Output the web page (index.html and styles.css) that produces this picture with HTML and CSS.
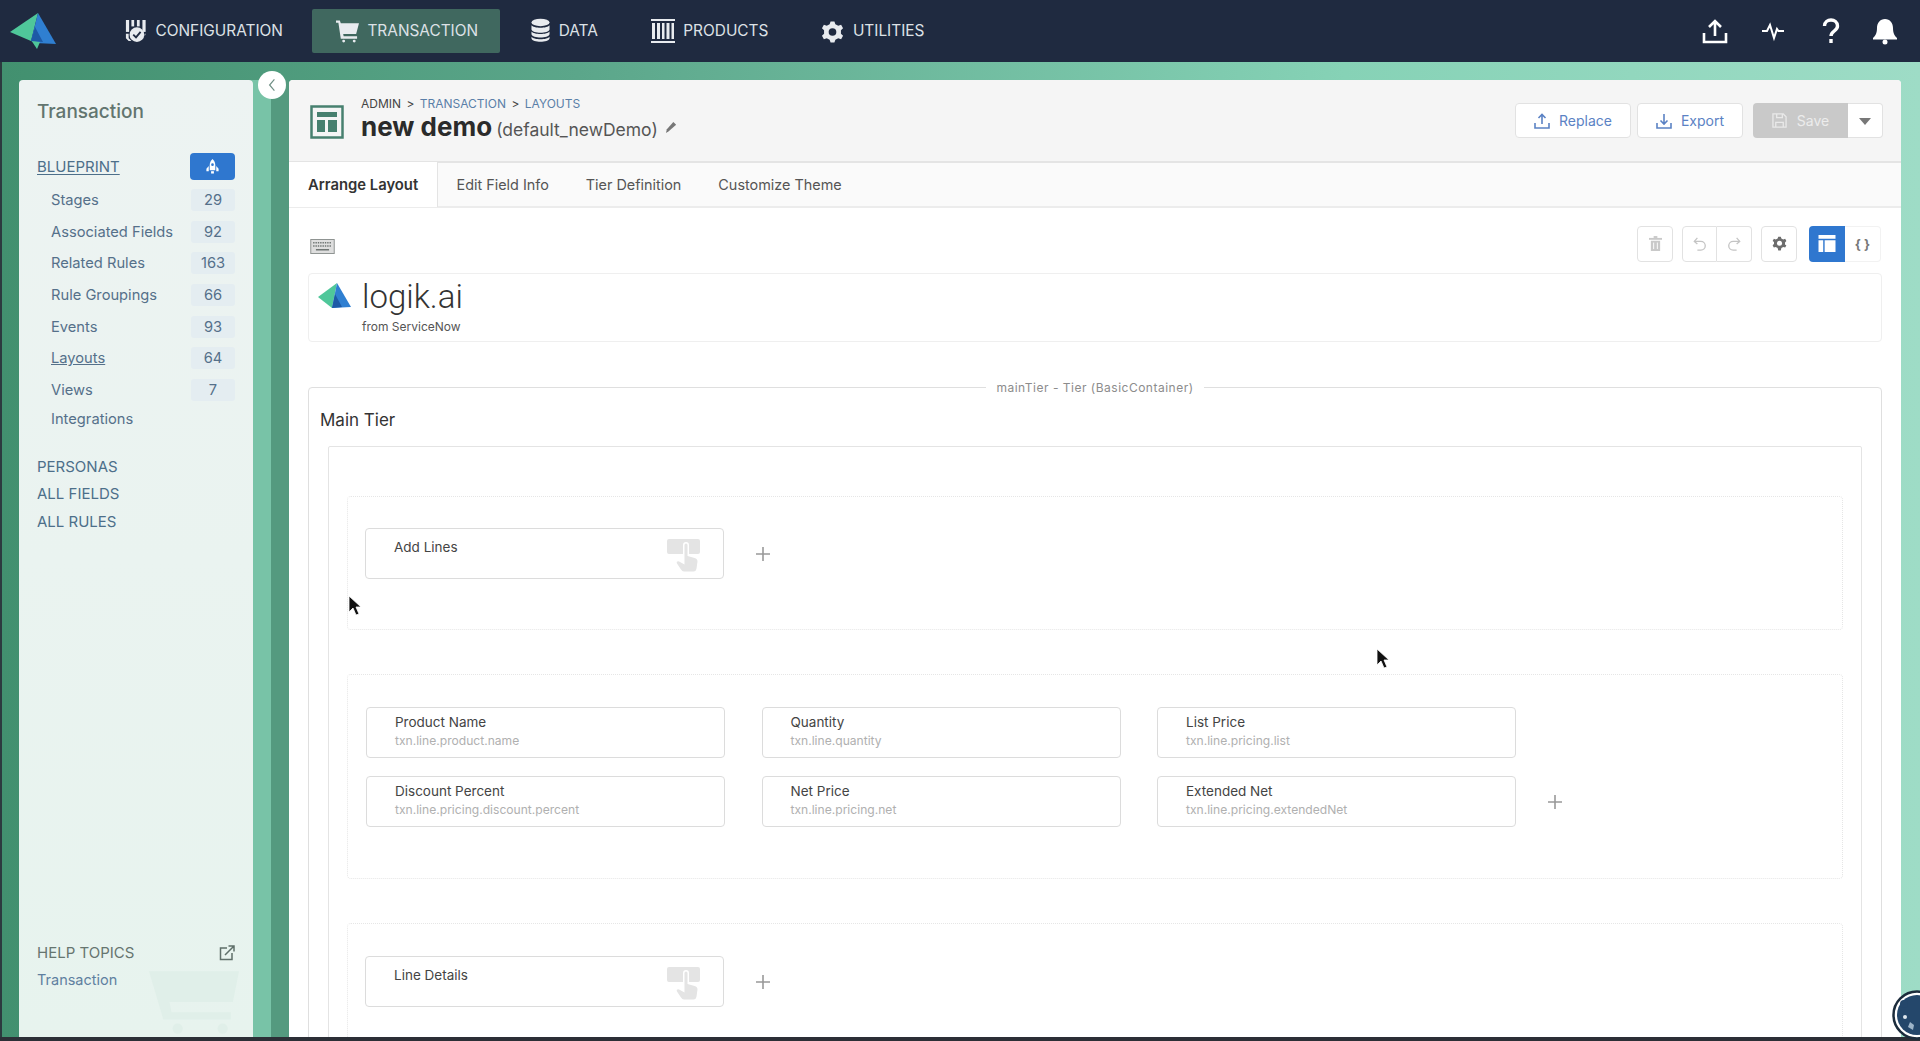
FILE: index.html
```html
<!DOCTYPE html>
<html lang="en">
<head>
    <meta charset="UTF-8">
    <meta name="viewport" content="width=device-width, initial-scale=1.0">
    <title>Layouts - new demo</title>
    <link rel="stylesheet" href="styles.css">
</head>
<body>
    <!-- Top Navigation -->
    <header class="topnav">
        <svg class="brand" viewBox="0 0 46 36">
            <polygon points="28,0 0,19 21,28" fill="#4fc79a"/>
            <polygon points="28,0 21,28 25,30 46,31" fill="#2f7fd1"/>
            <polygon points="21,27 27,36 30,29" fill="#4fc79a"/>
            <polygon points="25,14 21,28 33,29" fill="#1d5aa6"/>
        </svg>
        <nav class="nav-items">
            <a class="nav-item">
                <svg viewBox="0 0 24 26" width="22" height="24"><g fill="#e8ebef"><rect x="1" y="1" width="3.5" height="13"/><rect x="7" y="1" width="3" height="7"/><rect x="13" y="1" width="3" height="7"/><rect x="19" y="1" width="3.5" height="13"/><path d="M1 16h3v5l3 3H4l-3-3zM22.500 16h-1v3z"/><circle cx="13" cy="17" r="8"/></g><path d="M9 17l3 3 5-6" fill="none" stroke="#1f2a40" stroke-width="2"/></svg>
                CONFIGURATION
            </a>
            <a class="nav-item active">
                <svg viewBox="0 0 24 24" width="23" height="24"><path d="M0 1h4l1 3h19l-3 11H7.500L8 17.500h14V20H5L2.500 3.500H0z" fill="#e8ebef"/><circle cx="8" cy="22.500" r="1.500" fill="#e8ebef"/><circle cx="19" cy="22.500" r="1.500" fill="#e8ebef"/></svg>
                TRANSACTION
            </a>
            <a class="nav-item">
                <svg viewBox="0 0 20 26" width="19" height="25"><g fill="#e8ebef"><ellipse cx="10" cy="4.500" rx="9.500" ry="4"/><path d="M.5 7.500c2 3.500 17 3.500 19 0v4.500c-1 4.500-18 4.500-19 0z"/><path d="M.5 14c2 3.500 17 3.500 19 0v3c-1 4.500-18 4.500-19 0z"/><path d="M.5 19.500c2 3.500 17 3.500 19 0v2c-1 4.500-18 4.500-19 0z"/></g></svg>
                DATA
            </a>
            <a class="nav-item">
                <svg viewBox="0 0 24 24" width="24" height="24"><g fill="#e8ebef"><rect y="0" width="24" height="2"/><rect y="22" width="24" height="2"/><rect x="1" y="4" width="3" height="16"/><rect x="6" y="4" width="3" height="16"/><rect x="11" y="4" width="2.500" height="16"/><rect x="15.500" y="4" width="3" height="16"/><rect x="20.500" y="4" width="2.500" height="16"/></g></svg>
                PRODUCTS
            </a>
            <a class="nav-item">
                <svg viewBox="0 0 24 24" width="23" height="24"><path d="M12 2l2 0 1 3 3 1.500 3-1 2 3.500-2.200 2.200v3.600L23 17l-2 3.500-3-1L15 21l-1 3h-4l-1-3-3-1.500-3 1L1 17l2.200-2.200v-3.600L1 9l2-3.500 3 1L9 5l1-3z" fill="#e8ebef"/><circle cx="12" cy="13" r="4" fill="#1f2a40"/></svg>
                UTILITIES
            </a>
        </nav>
        <div class="nav-tools">
            <svg viewBox="0 0 28 28" width="28" height="28" fill="none" stroke="#fff" stroke-width="2.600"><path d="M14 19V4M8 10l6-6 6 6"/><path d="M3 16v9h22v-9"/></svg>
            <svg viewBox="0 0 28 28" width="28" height="28" fill="none" stroke="#fff" stroke-width="2"><path d="M3 14h5l3-6 4 13 3-9 1.500 2H25"/></svg>
            <svg viewBox="0 0 28 28" width="28" height="28" fill="none" stroke="#fff" stroke-width="3.400"><path d="M7.500 9c0-8 13-8 13 0 0 5-6.500 5-6.500 10"/><path d="M14 22v4"/></svg>
            <svg class="bell" viewBox="0 0 28 28" width="28" height="28" fill="#fff"><path d="M14 2c-5 0-8 4-8 9 0 6-2 8-4 10v1.500h24V21c-2-2-4-4-4-10 0-5-3-9-8-9z"/><circle cx="14" cy="25" r="2.500"/></svg>
        </div>
    </header>

    <div class="workspace">
        <!-- Sidebar -->
        <aside class="sidebar">
            <svg class="cart-mark" viewBox="0 0 88 60"><path d="M0 0h88l-6 30H20l2 10h58v7H14z" fill="#e0efe9"/><circle cx="28" cy="56" r="5" fill="#e0efe9"/><circle cx="72" cy="56" r="5" fill="#e0efe9"/></svg>
            <div class="sidebar-top">
                <h2 class="sidebar-title">Transaction</h2>
                <div class="side-head">
                    <a class="side-link current">BLUEPRINT</a>
                    <span class="rocket-badge">
                        <svg viewBox="0 0 16 16" width="15" height="15"><path d="M8 0c2.200 2 3 4.500 3 7v5H5V7c0-2.500.8-5 3-7z" fill="#fff"/><circle cx="8" cy="6" r="1.400" fill="#2f77cf"/><path d="M4 7.500V13H1.500v-2.500zM12 7.500V13h2.500v-2.500z" fill="#fff"/><rect x="6.500" y="13" width="3" height="2.500" fill="#fff"/></svg>
                    </span>
                </div>
                <ul class="side-list">
                    <li>Stages <span class="count">29</span></li>
                    <li>Associated Fields <span class="count">92</span></li>
                    <li>Related Rules <span class="count">163</span></li>
                    <li>Rule Groupings <span class="count">66</span></li>
                    <li>Events <span class="count">93</span></li>
                    <li><u>Layouts</u> <span class="count">64</span></li>
                    <li>Views <span class="count">7</span></li>
                    <li class="plain">Integrations</li>
                </ul>
                <div class="side-links">
                    <a class="side-link">PERSONAS</a>
                    <a class="side-link">ALL FIELDS</a>
                    <a class="side-link">ALL RULES</a>
                </div>
            </div>
            <div class="sidebar-help">
                <div class="help-head">
                    HELP TOPICS
                    <svg viewBox="0 0 16 16" width="16" height="16" fill="none" stroke="#5f6f6a" stroke-width="1.500"><path d="M8 3H1.500v11.500H13V8"/><path d="M6 10L15 1M9.500 1H15v5.500"/></svg>
                </div>
                <a class="help-link">Transaction</a>
            </div>
        </aside>

        <button class="collapse-btn">
            <svg viewBox="0 0 10 16" width="8" height="14" fill="none" stroke="#6f8f85" stroke-width="1.500"><path d="M8 1L2 8l6 7"/></svg>
        </button>

        <!-- Main Panel -->
        <main class="panel">
            <div class="panel-head">
                <svg class="page-icon" viewBox="0 0 34 34" width="34" height="34"><rect x="1.500" y="1.500" width="31" height="31" fill="none" stroke="#47806f" stroke-width="2.500"/><rect x="7" y="7" width="20" height="5" fill="#47806f"/><rect x="7" y="15" width="8" height="12" fill="#47806f"/><rect x="18" y="15" width="9" height="12" fill="#47806f"/></svg>
                <div class="page-title">
                    <div class="crumbs"><span>ADMIN</span> <i>&gt;</i> <a>TRANSACTION</a> <i>&gt;</i> <a>LAYOUTS</a></div>
                    <h1>new demo <small>(default_newDemo)</small>
                        <svg viewBox="0 0 14 14" width="13" height="13" fill="#777"><path d="M1 13l1-4 7-8 3 3-8 7z"/></svg>
                    </h1>
                </div>
                <div class="head-actions">
                    <button class="btn">
                        <svg viewBox="0 0 16 16" width="16" height="16" fill="none" stroke="#5b82c4" stroke-width="1.600"><path d="M8 11V1.500M4.500 5L8 1.500 11.500 5"/><path d="M1 10v5h14v-5"/></svg>
                        Replace
                    </button>
                    <button class="btn">
                        <svg viewBox="0 0 16 16" width="16" height="16" fill="none" stroke="#5b82c4" stroke-width="1.600"><path d="M8 1v10M4.500 7.500L8 11l3.500-3.500"/><path d="M1 10v5h14v-5"/></svg>
                        Export
                    </button>
                    <div class="save-group">
                        <button class="btn-save">
                            <svg viewBox="0 0 16 16" width="15" height="15" fill="none" stroke="#e9e9e9" stroke-width="1.400"><path d="M1 1h11l3 3v11H1zM5 1v4h6V1M4 15v-5h8v5"/></svg>
                            Save
                        </button>
                        <button class="btn-caret"></button>
                    </div>
                </div>
            </div>

            <div class="tabs">
                <a class="tab active">Arrange Layout</a>
                <a class="tab">Edit Field Info</a>
                <a class="tab">Tier Definition</a>
                <a class="tab">Customize Theme</a>
            </div>

            <div class="panel-body">
                <div class="toolbar">
                    <svg viewBox="0 0 26 16" width="25" height="15"><rect x=".5" y=".5" width="25" height="15" fill="#dedede" stroke="#8a8f8d"/><path d="M3 4h20M3 7.500h20" stroke="#6f7573" stroke-width="1.600" stroke-dasharray="1.500 1"/><path d="M6 11.500h14" stroke="#6f7573" stroke-width="1.600"/></svg>
                    <div class="tool-group">
                        <span class="tool faded">
                            <svg viewBox="0 0 14 16" width="13" height="15" fill="#c9c9c9"><rect x="5" y="0" width="4" height="2"/><rect x="0" y="2" width="14" height="2"/><path d="M2 5h10v11H2z"/><path d="M5 7v7M9 7v7" stroke="#fff"/></svg>
                        </span>
                        <div class="tool-pair">
                            <span class="tool">
                                <svg viewBox="0 0 16 16" width="14" height="14" fill="none" stroke="#c4c4c4" stroke-width="1.500"><path d="M5 1L1.500 5 5 8"/><path d="M2 5h7a5 5 0 010 10H5"/></svg>
                            </span>
                            <span class="tool">
                                <svg viewBox="0 0 16 16" width="14" height="14" fill="none" stroke="#c4c4c4" stroke-width="1.500"><path d="M11 1l3.500 4L11 8"/><path d="M14 5H7a5 5 0 000 10h4"/></svg>
                            </span>
                        </div>
                        <span class="tool">
                            <svg viewBox="0 0 24 24" width="15" height="15"><path d="M10 1h4l1 3 3 1.500 3-1 2 3.500-2.200 2.500v3L23 15l-2 3.500-3-1L15 19l-1 4h-4l-1-4-3-1.500-3 1L1 15l2.200-2.500v-3L1 8l2-3.500 3 1L9 4z" fill="#6d6d6d"/><circle cx="12" cy="11.500" r="4" fill="#fff"/></svg>
                        </span>
                        <div class="view-switch">
                            <span class="view on">
                                <svg viewBox="0 0 18 18" width="18" height="17" fill="#fff"><path d="M0 0h18v4H0zM0 5.500h5V18H0zM6.500 5.500H18V18H6.500z"/></svg>
                            </span>
                            <span class="view braces">{ }</span>
                        </div>
                    </div>
                </div>

                <div class="logo-box">
                    <svg viewBox="0 0 34 26" width="34" height="26">
                        <polygon points="19,0 0,14 14,25" fill="#4fc79a"/>
                        <polygon points="19,0 14,25 33,24" fill="#2f7fd1"/>
                        <polygon points="17,11 14,25 24,24" fill="#1d5aa6"/>
                    </svg>
                    <div class="logo-text">
                        <span class="logo-name">logik.ai</span>
                        <span class="logo-from">from ServiceNow</span>
                    </div>
                </div>

                <fieldset class="tier">
                    <legend>mainTier - Tier (BasicContainer)</legend>
                    <h3 class="tier-title">Main Tier</h3>
                    <div class="tier-inner">
                        <section class="tier-row short">
                            <div class="single">
                                <div class="card action">
                                    <span class="card-label">Add Lines</span>
                                    <svg class="touch" viewBox="0 0 33 33" width="33" height="33"><path d="M2 0h29a2 2 0 012 2v11a2 2 0 01-2 2h-9V6a3 3 0 00-6 0v9H2a2 2 0 01-2-2V2a2 2 0 012-2z" fill="#e4e4e4"/><path d="M17.500 6a1.500 1.500 0 013 0v11l7 2c2 .5 3 1.500 3 3.500l-1 7c-.5 2-1 3-3 3H17c-1.500 0-2-1-3-2l-4-6c-1-2 1-3 3-1.500l4.500 2.500z" fill="#e4e4e4"/></svg>
                                </div>
                                <svg class="plus" viewBox="0 0 16 16" width="16" height="16" stroke="#999" stroke-width="1.600"><path d="M8 1v14M1 8h14"/></svg>
                            </div>
                        </section>

                        <section class="tier-row wide">
                            <div class="field-grid">
                                <div class="card"><span class="card-label">Product Name</span><span class="card-sub">txn.line.product.name</span></div>
                                <div class="card"><span class="card-label">Quantity</span><span class="card-sub">txn.line.quantity</span></div>
                                <div class="card"><span class="card-label">List Price</span><span class="card-sub">txn.line.pricing.list</span></div>
                                <span></span>
                                <div class="card"><span class="card-label">Discount Percent</span><span class="card-sub">txn.line.pricing.discount.percent</span></div>
                                <div class="card"><span class="card-label">Net Price</span><span class="card-sub">txn.line.pricing.net</span></div>
                                <div class="card"><span class="card-label">Extended Net</span><span class="card-sub">txn.line.pricing.extendedNet</span></div>
                                <svg class="plus grid-plus" viewBox="0 0 16 16" width="16" height="16" stroke="#999" stroke-width="1.600"><path d="M8 1v14M1 8h14"/></svg>
                            </div>
                        </section>

                        <section class="tier-row last">
                            <div class="single">
                                <div class="card action">
                                    <span class="card-label">Line Details</span>
                                    <svg class="touch" viewBox="0 0 33 33" width="33" height="33"><path d="M2 0h29a2 2 0 012 2v11a2 2 0 01-2 2h-9V6a3 3 0 00-6 0v9H2a2 2 0 01-2-2V2a2 2 0 012-2z" fill="#e4e4e4"/><path d="M17.500 6a1.500 1.500 0 013 0v11l7 2c2 .5 3 1.500 3 3.500l-1 7c-.5 2-1 3-3 3H17c-1.500 0-2-1-3-2l-4-6c-1-2 1-3 3-1.500l4.500 2.500z" fill="#e4e4e4"/></svg>
                                </div>
                                <svg class="plus" viewBox="0 0 16 16" width="16" height="16" stroke="#999" stroke-width="1.600"><path d="M8 1v14M1 8h14"/></svg>
                            </div>
                        </section>
                    </div>
                </fieldset>
            </div>
        </main>
    </div>

    <!-- Things lying over the page -->
    <svg class="cursor cursor-a" viewBox="0 0 14 22" width="14" height="22"><path d="M1 1v16l4-4 3 7 3-1-3-7h5z" fill="#111" stroke="#fff" stroke-width=".8"/></svg>
    <svg class="cursor cursor-b" viewBox="0 0 14 22" width="14" height="22"><path d="M1 1v16l4-4 3 7 3-1-3-7h5z" fill="#111" stroke="#fff" stroke-width=".8"/></svg>
    <svg class="bear" viewBox="0 0 50 50" width="50" height="50">
        <circle cx="25" cy="25" r="23.500" fill="#fff" stroke="#1c2c3c" stroke-width="2.500"/>
        <circle cx="25" cy="25" r="20" fill="#24476b"/>
        <circle cx="12" cy="14" r="4" fill="#24476b"/>
        <circle cx="13" cy="27" r="2" fill="#dfe7ee"/>
        <path d="M18 32l4 3-1 5-5-3z" fill="#9db4c8"/>
    </svg>
</body>
</html>
```

FILE: styles.css
```css
/* Global Styles */
* {
    box-sizing: border-box;
}

html, body {
    height: 100%;
}

body {
    margin: 0;
    display: flex;
    flex-direction: column;
    overflow: hidden;
    font-family: 'Inter', 'Liberation Sans', sans-serif;
    color: #333;
    background: #2c2f36;
}

a {
    cursor: pointer;
}

/* Top Navigation */
.topnav {
    height: 62px;
    flex: none;
    display: flex;
    align-items: center;
    padding: 0 21px 0 10px;
    background: #1f2a40;
}

.brand {
    width: 46px;
    height: 36px;
    flex: none;
}

.nav-items {
    display: flex;
    gap: 7px;
    margin-left: 45px;
    margin-top: -1px;
}

.nav-item {
    display: flex;
    align-items: center;
    gap: 8.500px;
    height: 44px;
    padding: 0 22px 0 24px;
    border-radius: 2px;
    font-size: 15.400px;
    color: #dde1e6;
}

.nav-item.active {
    background: #40685f;
}

.nav-tools {
    display: flex;
    align-items: center;
    gap: 30px;
    margin-left: auto;
}

.nav-tools .bell {
    margin-left: -4px;
}

/* Page Frame */
.workspace {
    flex: 1;
    min-height: 0;
    display: flex;
    position: relative;
    padding: 18px 19px 0 17px;
    margin-bottom: 4px;
    border-left: 2px solid #2c3a3f;
    background: linear-gradient(90deg, #42906f 0%, #5ba68a 30%, #86d2b6 70%, #9edcc6 100%);
}

/* Sidebar */
.sidebar {
    position: relative;
    width: 234px;
    flex: none;
    display: flex;
    flex-direction: column;
    justify-content: space-between;
    padding: 19px 18px 49px 18px;
    border-radius: 4px 4px 0 0;
    background: linear-gradient(180deg, #edf3f2, #e7f3ee);
    box-shadow: 18px 0 0 #78c3a7, 36px 0 0 #549a7f;
}

.cart-mark {
    position: absolute;
    left: 130px;
    top: 890px;
    width: 90px;
    height: 64px;
}

.sidebar-top,
.sidebar-help {
    position: relative;
}

.sidebar-title {
    margin: 0;
    font-size: 19px;
    font-weight: 500;
    line-height: 26px;
    color: #62756f;
}

.side-head {
    display: flex;
    align-items: center;
    justify-content: space-between;
    margin-top: 28px;
}

.side-link {
    font-size: 15px;
    color: #4d6f8a;
}

.side-link.current {
    text-decoration: underline;
    text-underline-offset: 2px;
}

.rocket-badge {
    width: 45px;
    height: 27px;
    display: flex;
    align-items: center;
    justify-content: center;
    border-radius: 4px;
    background: #2f77cf;
}

.side-list {
    list-style: none;
    margin: 4px 0 0;
    padding: 0 0 0 14px;
    font-size: 14.700px;
    color: #55708a;
}

.side-list li {
    display: flex;
    align-items: center;
    justify-content: space-between;
    height: 31.700px;
}

.side-list li.plain {
    height: 27px;
}

.count {
    width: 44px;
    height: 22px;
    line-height: 22px;
    text-align: center;
    border-radius: 3px;
    background: #e4edf1;
}

.side-links {
    display: flex;
    flex-direction: column;
    gap: 10.500px;
    margin-top: 25px;
}

.side-links .side-link {
    line-height: 17px;
}

.help-head {
    display: flex;
    align-items: center;
    justify-content: space-between;
    font-size: 15px;
    color: #66756f;
}

.help-link {
    display: block;
    margin-top: 9px;
    font-size: 14.500px;
    color: #5f80a0;
}

.collapse-btn {
    position: absolute;
    left: 256px;
    top: 9px;
    width: 28px;
    height: 28px;
    display: flex;
    align-items: center;
    justify-content: center;
    padding: 0;
    border: none;
    border-radius: 50%;
    background: #fff;
}

/* Main Panel */
.panel {
    flex: 1;
    min-width: 0;
    margin-left: 36px;
    display: flex;
    flex-direction: column;
    overflow: hidden;
    border-radius: 4px 4px 0 0;
    background: #fff;
}

.panel-head {
    height: 83px;
    flex: none;
    display: flex;
    align-items: center;
    padding: 0 18px 0 21px;
    background: #f5f5f5;
    border-bottom: 2px solid #e4e4e4;
}

.page-icon {
    flex: none;
    margin-top: 3px;
}

.page-title {
    margin-left: 17px;
    margin-top: -1px;
}

.crumbs {
    font-size: 12px;
    line-height: 16px;
    color: #444;
}

.crumbs a {
    color: #5a7fa8;
}

.crumbs i {
    font-style: normal;
    margin: 0 2px;
}

.page-title h1 {
    margin: -2px 0 0;
    display: flex;
    align-items: center;
    font-size: 26px;
    font-weight: 700;
    line-height: 30px;
    color: #2b2b2b;
}

.page-title small {
    margin-left: 4px;
    margin-top: 5px;
    font-size: 17.500px;
    font-weight: 400;
    color: #555;
}

.page-title h1 svg {
    margin-left: 7px;
}

.head-actions {
    display: flex;
    align-items: center;
    gap: 6px;
    margin-left: auto;
}

.btn {
    height: 35px;
    display: flex;
    align-items: center;
    justify-content: center;
    gap: 9px;
    padding: 0 18px;
    border: 1px solid #e2e2e2;
    border-radius: 4px;
    background: #fff;
    font: inherit;
    font-size: 14px;
    color: #5b82c4;
}

.save-group {
    display: flex;
    margin-left: 4px;
}

.btn-save {
    width: 95px;
    height: 35px;
    display: flex;
    align-items: center;
    justify-content: center;
    gap: 10px;
    border: none;
    border-radius: 4px 0 0 4px;
    background: #c9c9c9;
    font: inherit;
    font-size: 14px;
    color: #ececec;
}

.btn-caret {
    position: relative;
    width: 35px;
    height: 35px;
    border: 1px solid #e2e2e2;
    border-left: none;
    border-radius: 0 4px 4px 0;
    background: #fff;
}

.btn-caret::after {
    content: "";
    position: absolute;
    left: 11px;
    top: 14px;
    border: 6px solid transparent;
    border-top: 7px solid #777;
    border-bottom: none;
}

/* Tabs */
.tabs {
    height: 45px;
    flex: none;
    display: flex;
    align-items: center;
    background: #fafafa;
    border-bottom: 2px solid #ececec;
}

.tab {
    padding: 0 18.500px;
    font-size: 14.400px;
    color: #555;
}

.tab.active {
    height: 45px;
    width: 149px;
    display: flex;
    align-items: center;
    justify-content: flex-start;
    padding: 0 0 0 19px;
    margin-right: 0;
    background: #fff;
    border-right: 1px solid #e4e4e4;
    font-size: 14.800px;
    font-weight: 600;
    color: #333;
}

/* Panel Body */
.panel-body {
    flex: 1;
    min-height: 0;
    padding: 17px 19px 0;
}

.toolbar {
    height: 37px;
    display: flex;
    align-items: center;
    justify-content: space-between;
    padding-left: 2px;
}

.toolbar > svg {
    margin-top: 5px;
}

.tool-group {
    display: flex;
    align-items: center;
    gap: 9px;
    margin-right: 1px;
}

.tool,
.view {
    width: 36px;
    height: 36px;
    display: flex;
    align-items: center;
    justify-content: center;
    border: 1px solid #e2e2e2;
    border-radius: 4px;
    background: #fff;
}

.tool-pair {
    display: flex;
}

.tool-pair .tool {
    width: 35px;
}

.tool-pair .tool:first-child {
    border-radius: 4px 0 0 4px;
}

.tool-pair .tool:last-child {
    border-left: none;
    border-radius: 0 4px 4px 0;
}

.view-switch {
    display: flex;
    margin-left: 3px;
}

.view.on {
    border: none;
    border-radius: 4px 0 0 4px;
    background: #2f77cf;
}

.view.braces {
    border: 1px solid #f2f2f2;
    border-left: none;
    border-radius: 0 4px 4px 0;
    font-size: 13px;
    font-weight: 700;
    color: #777;
}

.logo-box {
    height: 69px;
    margin-top: 11px;
    display: flex;
    align-items: flex-start;
    padding: 9px 0 0 9px;
    border: 1px solid #efefef;
    border-radius: 4px;
}

.logo-text {
    display: flex;
    flex-direction: column;
    margin-left: 10px;
    margin-top: -5px;
}

.logo-name {
    font-family: 'Roboto', sans-serif;
    font-size: 33px;
    font-weight: 300;
    line-height: 38px;
    color: #333;
}

.logo-from {
    margin-top: 3px;
    font-size: 12px;
    line-height: 16px;
    color: #555;
}

/* Tier */
.tier {
    margin: 38px 0 0;
    padding: 0 19px;
    min-width: 0;
    border: 1px solid #dfdfdf;
    border-radius: 4px;
}

.tier legend {
    margin: 0 auto;
    padding: 0 10px;
    font-size: 12px;
    line-height: 15px;
    letter-spacing: 0.5px;
    color: #8c8c8c;
}

.tier-title {
    margin: 13px 0 0;
    margin-left: -8px;
    font-size: 17px;
    font-weight: 400;
    line-height: 24px;
    color: #333;
}

.tier-inner {
    margin-top: 14px;
    padding: 49px 18px 60px 18px;
    display: flex;
    flex-direction: column;
    gap: 44px;
    border: 1px solid #e4e4e4;
    border-radius: 2px;
}

.tier-row {
    padding: 0 19px 0 17px;
    border: 1px dotted #e6e6e6;
    border-radius: 4px;
}

.tier-row.short {
    height: 134px;
    padding-top: 31px;
}

.tier-row.wide {
    height: 205px;
    padding-top: 32px;
}

.tier-row.last {
    height: 200px;
    padding-top: 32px;
}

.single {
    display: flex;
    align-items: center;
    gap: 31px;
}

.field-grid {
    display: grid;
    grid-template-columns: repeat(3, 359px) 16px;
    column-gap: 36.500px;
    row-gap: 18px;
    align-items: center;
    margin-left: 1px;
}

.card {
    position: relative;
    height: 51px;
    display: flex;
    flex-direction: column;
    padding: 6px 0 0 28px;
    border: 1px solid #dcdcdc;
    border-radius: 4px;
    background: #fff;
}

.card.action {
    width: 359px;
    padding-top: 10px;
}

.card-label {
    font-size: 13.500px;
    line-height: 17px;
    color: #444;
}

.card-sub {
    margin-top: 3px;
    font-size: 12.100px;
    line-height: 14px;
    color: #b0b0b0;
}

.touch {
    position: absolute;
    right: 23px;
    top: 10px;
}

.grid-plus {
    margin-left: -6px;
}

/* Overlays */
.cursor {
    position: absolute;
}

.cursor-a {
    left: 348px;
    top: 595px;
}

.cursor-b {
    left: 1376px;
    top: 648px;
}

.bear {
    position: absolute;
    left: 1892px;
    top: 990px;
}
```
